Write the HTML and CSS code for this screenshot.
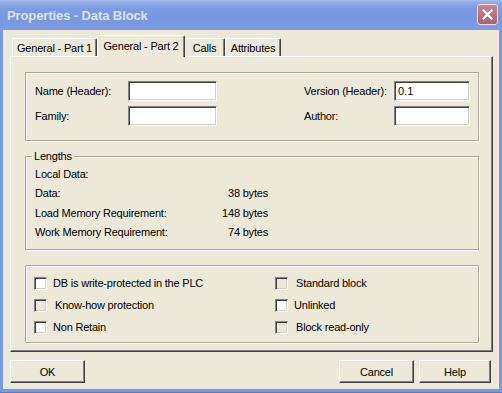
FILE: index.html
```html
<!DOCTYPE html>
<html lang="en">
<head>
    <meta charset="UTF-8">
    <title>Properties - Data Block</title>
    <link rel="stylesheet" href="styles.css">
</head>
<body>
    <div class="window">
        <div class="titlebar">
            <span class="title">Properties - Data Block</span>
            <button class="close-button" title="Close">
                <svg width="11" height="11" viewBox="0 0 11 11">
                    <path d="M1.5 1.5 L9.5 9.5 M9.5 1.5 L1.5 9.5" stroke="#fff" stroke-width="2.2" stroke-linecap="square"/>
                </svg>
            </button>
        </div>

        <div class="dialog-body">
            <div class="tabs">
                <div class="tab tab-first">General - Part 1</div>
                <div class="tab active">General - Part 2</div>
                <div class="tab tab-calls">Calls</div>
                <div class="tab tab-attributes">Attributes</div>
            </div>

            <div class="tab-panel">
                <div class="group header-fields">
                    <label>Name (Header):</label>
                    <input type="text" class="field field-name">
                    <span></span>
                    <label>Version (Header):</label>
                    <input type="text" class="field field-version" value="0.1">

                    <label>Family:</label>
                    <input type="text" class="field field-name">
                    <span></span>
                    <label>Author:</label>
                    <input type="text" class="field field-version">
                </div>

                <fieldset class="group lengths">
                    <legend>Lengths</legend>
                    <div class="length-row"><span>Local Data:</span><span></span></div>
                    <div class="length-row"><span>Data:</span><span class="value">38 bytes</span></div>
                    <div class="length-row"><span>Load Memory Requirement:</span><span class="value">148 bytes</span></div>
                    <div class="length-row"><span>Work Memory Requirement:</span><span class="value">74 bytes</span></div>
                </fieldset>

                <div class="group options">
                    <div class="option"><span class="check"></span><span>DB is write-protected in the PLC</span></div>
                    <div class="option disabled"><span class="check"></span><span>Standard block</span></div>
                    <div class="option disabled"><span class="check"></span><span>Know-how protection</span></div>
                    <div class="option"><span class="check"></span><span>Unlinked</span></div>
                    <div class="option"><span class="check"></span><span>Non Retain</span></div>
                    <div class="option disabled"><span class="check"></span><span>Block read-only</span></div>
                </div>
            </div>

            <div class="buttons">
                <button class="push-button">OK</button>
                <span class="spacer"></span>
                <button class="push-button">Cancel</button>
                <button class="push-button help">Help</button>
            </div>
        </div>
    </div>
</body>
</html>
```

FILE: styles.css
```css
* {
    margin: 0;
    padding: 0;
    box-sizing: border-box;
}

body {
    font-family: 'Liberation Sans', Arial, sans-serif;
    font-size: 11px;
    letter-spacing: -0.2px;
    color: #000;
    background: #fff;
}

.window {
    width: 502px;
    height: 393px;
    display: flex;
    flex-direction: column;
    background: #7b97e0;
    padding: 0 3px 3px 3px;
    border-bottom: 1px solid #5d77c9;
}

/* title bar */

.titlebar {
    height: 30px;
    margin: 0 -3px;
    padding: 0 4px 0 7px;
    display: flex;
    align-items: center;
    justify-content: space-between;
    background: linear-gradient(#a9c0f0 0, #93aeea 2px, #7f9ce3 8px, #7a96df 60%, #7f9be2 100%);
}

.title {
    font-family: 'Liberation Sans', Arial, sans-serif;
    font-weight: bold;
    font-size: 13px;
    color: #d8e4f8;
    letter-spacing: -0.1px;
    margin-top: 1px;
}

.close-button {
    width: 21px;
    height: 21px;
    border: 1px solid #e8dfe6;
    border-radius: 3px;
    background: linear-gradient(#c7838c, #b86f7a 60%, #ab6470);
    display: flex;
    align-items: center;
    justify-content: center;
    margin-top: -1px;
}

/* dialog body */

.dialog-body {
    flex: 1;
    background: #ece9d8;
    padding: 5px 6px 0 7px;
    display: flex;
    flex-direction: column;
}

.tabs {
    display: flex;
    align-items: flex-end;
    height: 21px;
    padding-left: 2px;
}

.tab {
    height: 18px;
    border-top: 1px solid #fff;
    border-left: 1px solid #fff;
    border-right: 1px solid #404040;
    border-radius: 2px 2px 0 0;
    box-shadow: inset -1px 0 #808080;
    display: flex;
    align-items: center;
    justify-content: center;
    padding-top: 1px;
}

.tab-first {
    width: 85px;
}

.tab.active {
    width: 88px;
    height: 22px;
    margin-bottom: -1px;
    padding-bottom: 3px;
    position: relative;
    z-index: 1;
    background: #ece9d8;
}

.tab-calls {
    width: 40px;
    border-left: none;
}

.tab-attributes {
    width: 56px;
}

.tab-panel {
    height: 296px;
    border-top: 1px solid #fff;
    border-left: 1px solid #fff;
    border-right: 1px solid #404040;
    border-bottom: 1px solid #404040;
    box-shadow: inset -1px -1px #808080;
    padding: 15px 13px 0 14px;
    display: flex;
    flex-direction: column;
    gap: 15px;
}

.group {
    border: 1px solid #aca899;
    box-shadow: inset 1px 1px #fff, 1px 1px #fff;
}

/* header fields */

.header-fields {
    height: 69px;
    padding: 8px 0 0 9px;
    display: grid;
    grid-template-columns: 93px 89px 87px 90px 76px;
    grid-auto-rows: 20px;
    row-gap: 5px;
    align-items: center;
}

.field {
    height: 20px;
    font-family: inherit;
    font-size: 11px;
    padding: 0 3px;
    background: #fff;
    border-top: 1px solid #808080;
    border-left: 1px solid #808080;
    border-right: 1px solid #fff;
    border-bottom: 1px solid #fff;
    box-shadow: inset 1px 1px #404040, inset -1px -1px #d4d0c8;
    outline: none;
}

.field-name {
    width: 89px;
}

.field-version {
    width: 76px;
}

/* lengths */

.lengths {
    height: 100px;
    margin-top: -6px;
    padding: 2px 0 0 9px;
}

.lengths legend {
    margin-left: -3px;
    padding: 0 2px;
    background: #ece9d8;
}

.length-row {
    height: 19.5px;
    display: grid;
    grid-template-columns: 155px 78px;
    align-items: center;
}

.length-row .value {
    text-align: right;
}

/* options */

.options {
    height: 78px;
    padding: 6px 0 0 8px;
    display: grid;
    grid-template-columns: 241px 1fr;
    grid-auto-rows: 22px;
}

.option {
    display: flex;
    align-items: center;
    gap: 6px;
}

.option.disabled {
    gap: 8px;
}

.check {
    width: 13px;
    height: 13px;
    background: #fff;
    border-top: 1px solid #808080;
    border-left: 1px solid #808080;
    border-right: 1px solid #fff;
    border-bottom: 1px solid #fff;
    box-shadow: inset 1px 1px #404040, inset -1px -1px #d4d0c8;
}

.option.disabled .check {
    background: #ece9d8;
}

/* buttons */

.buttons {
    display: flex;
    margin-top: 8px;
    gap: 5px;
}

.spacer {
    flex: 1;
}

.push-button {
    width: 75px;
    height: 23px;
    font-family: inherit;
    font-size: 11px;
    letter-spacing: -0.2px;
    background: #ece9d8;
    border-top: 1px solid #fff;
    border-left: 1px solid #fff;
    border-right: 1px solid #404040;
    border-bottom: 1px solid #404040;
    box-shadow: inset -1px -1px #808080;
}

.push-button.help {
    width: 72px;
    margin-right: 2px;
}
```
